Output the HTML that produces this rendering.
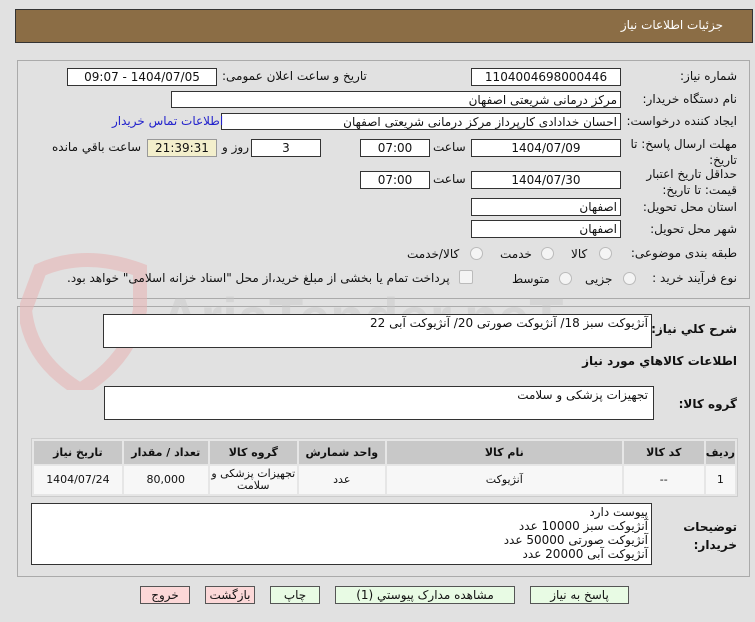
<!DOCTYPE html>
<html><head><meta charset="utf-8"><style>
body{margin:0;width:755px;height:622px;background:#e1e1e1;font-family:"DejaVu Sans","Liberation Sans",sans-serif;font-size:11px;color:#111;position:relative;overflow:hidden;direction:rtl}
.a{position:absolute;white-space:nowrap}
.box{position:absolute;background:#fff;border:1px solid #333;box-sizing:border-box;font-size:12px;line-height:16px;text-align:center}
.panel{position:absolute;border:1px solid #aaa;box-sizing:border-box;background:#e1e1e1}
.lbl{position:absolute;white-space:nowrap;font-size:12px;letter-spacing:-0.4px}
.b{font-weight:bold}
.rad{position:absolute;width:11px;height:11px;border-radius:50%;border:1px solid #bbb;background:#f4f4f4}
table{position:absolute;border-collapse:separate;border-spacing:2px;background:#e6e6e6;border:1px solid #ccc}
th{background:#c8c8c8;font-size:11px;height:23px;padding:0}
td{background:#f7f7f7;font-size:11px;height:28px;text-align:center;padding:0;line-height:12px}
.btn{position:absolute;top:586px;height:18px;border:1px solid #555;box-sizing:border-box;font-size:12px;text-align:center;line-height:16px;background:#e8fbe4}
</style></head><body>
<div class="a" style="left:15px;top:9px;width:738px;height:34px;background:#8b6d45;border:1px solid #333;box-sizing:border-box"></div>
<div class="a" style="right:32px;top:18px;color:#fff;font-size:12px">جزئیات اطلاعات نیاز</div>

<div class="panel" style="left:17px;top:60px;width:733px;height:239px"></div>
<div class="panel" style="left:17px;top:306px;width:733px;height:271px"></div>

<svg class="a" style="left:20px;top:250px" width="130" height="140" viewBox="0 0 130 140"><path d="M20 20 Q65 0 120 20 L120 60 Q110 110 60 140 Q10 110 5 60 Z" fill="none" stroke="#e6b5b5" stroke-width="14" opacity=".6"/></svg>
<div class="a" style="left:160px;top:285px;font-size:56px;font-weight:bold;color:#c8c8c8;opacity:.45;direction:ltr;font-family:'Liberation Sans',sans-serif">AriaTender.neT</div>

<div class="lbl" style="right:18px;top:69px">شماره نیاز:</div>
<div class="box" style="left:471px;top:68px;width:150px;height:18px">1104004698000446</div>
<div class="lbl" style="left:222px;top:69px">تاریخ و ساعت اعلان عمومی:</div>
<div class="box" style="left:67px;top:68px;width:150px;height:18px">1404/07/05 - 09:07</div>

<div class="lbl" style="right:18px;top:92px">نام دستگاه خریدار:</div>
<div class="box" style="left:171px;top:91px;width:450px;height:17px;text-align:right;padding-right:3px">مرکز درمانی شریعتی اصفهان</div>

<div class="lbl" style="right:18px;top:114px;letter-spacing:-0.8px">ایجاد کننده درخواست:</div>
<div class="box" style="left:221px;top:113px;width:400px;height:17px;text-align:right;padding-right:3px">احسان خدادادی کارپرداز مرکز درمانی شریعتی اصفهان</div>
<div class="lbl" style="left:112px;top:114px;color:#22c">اطلاعات تماس خریدار</div>

<div class="lbl" style="right:18px;top:136px;line-height:16px;white-space:normal;width:110px">مهلت ارسال پاسخ: تا تاریخ:</div>
<div class="box" style="left:471px;top:139px;width:150px;height:18px">1404/07/09</div>
<div class="lbl" style="left:433px;top:140px">ساعت</div>
<div class="box" style="left:360px;top:139px;width:70px;height:18px">07:00</div>
<div class="box" style="left:251px;top:139px;width:70px;height:18px">3</div>
<div class="lbl" style="left:222px;top:140px">روز و</div>
<div class="box" style="left:147px;top:139px;width:70px;height:18px;background:#f3efcc;border-color:#999">21:39:31</div>
<div class="lbl" style="left:52px;top:140px">ساعت باقي مانده</div>

<div class="lbl" style="right:18px;top:166px;line-height:16px;white-space:normal;width:110px">حداقل تاریخ اعتبار قیمت: تا تاریخ:</div>
<div class="box" style="left:471px;top:171px;width:150px;height:18px">1404/07/30</div>
<div class="lbl" style="left:433px;top:172px">ساعت</div>
<div class="box" style="left:360px;top:171px;width:70px;height:18px">07:00</div>

<div class="lbl" style="right:18px;top:200px">استان محل تحویل:</div>
<div class="box" style="left:471px;top:198px;width:150px;height:18px;text-align:right;padding-right:3px">اصفهان</div>
<div class="lbl" style="right:18px;top:222px">شهر محل تحویل:</div>
<div class="box" style="left:471px;top:220px;width:150px;height:18px;text-align:right;padding-right:3px">اصفهان</div>

<div class="lbl" style="right:18px;top:246px">طبقه بندی موضوعی:</div>
<div class="rad" style="left:599px;top:247px"></div><div class="lbl" style="left:571px;top:247px">کالا</div>
<div class="rad" style="left:541px;top:247px"></div><div class="lbl" style="left:500px;top:247px">خدمت</div>
<div class="rad" style="left:470px;top:247px"></div><div class="lbl" style="left:407px;top:247px">کالا/خدمت</div>

<div class="lbl" style="right:18px;top:271px">نوع فرآیند خرید :</div>
<div class="rad" style="left:623px;top:272px"></div><div class="lbl" style="left:585px;top:272px">جزیی</div>
<div class="rad" style="left:559px;top:272px"></div><div class="lbl" style="left:512px;top:272px">متوسط</div>
<div class="a" style="left:459px;top:270px;width:12px;height:12px;border:1px solid #bbb;background:#f4f4f4;border-radius:2px"></div>
<div class="lbl" style="left:67px;top:271px;letter-spacing:-0.6px">پرداخت تمام یا بخشی از مبلغ خرید،از محل "اسناد خزانه اسلامی" خواهد بود.</div>

<div class="lbl b" style="right:18px;top:322px">شرح کلي نیاز:</div>
<div class="box" style="left:103px;top:314px;width:549px;height:34px;text-align:right;padding-right:3px">آنژیوکت سبز 18/ آنژیوکت صورتی 20/ آنژیوکت آبی 22</div>
<div class="lbl b" style="right:18px;top:354px">اطلاعات کالاهاي مورد نیاز</div>
<div class="lbl b" style="right:18px;top:397px">گروه کالا:</div>
<div class="box" style="left:104px;top:386px;width:550px;height:34px;text-align:right;padding-right:5px">تجهیزات پزشکی و سلامت</div>

<table style="left:31px;top:438px;width:707px">
<tr><th style="width:27px">ردیف</th><th style="width:80px">کد کالا</th><th style="width:235px">نام کالا</th><th style="width:86px">واحد شمارش</th><th style="width:87px">گروه کالا</th><th style="width:84px">تعداد / مقدار</th><th>تاریخ نیاز</th></tr>
<tr><td>1</td><td>--</td><td>آنژیوکت</td><td>عدد</td><td>تجهیزات پزشکی و سلامت</td><td>80,000</td><td>1404/07/24</td></tr>
</table>

<div class="lbl b" style="right:18px;top:518px;line-height:18px">توضیحات<br>خریدار:</div>
<div class="box" style="left:31px;top:503px;width:621px;height:62px;text-align:right;padding-right:3px;padding-top:1px;line-height:14px">پیوست دارد<br>آنژیوکت سبز 10000 عدد<br>آنژیوکت صورتی 50000 عدد<br>آنژیوکت آبی 20000 عدد</div>

<div class="btn" style="left:140px;width:50px;background:#fcd8d8">خروج</div>
<div class="btn" style="left:205px;width:50px;background:#fcd8d8">بازگشت</div>
<div class="btn" style="left:270px;width:50px">چاپ</div>
<div class="btn" style="left:335px;width:180px">مشاهده مدارک پیوستي (1)</div>
<div class="btn" style="left:530px;width:99px">پاسخ به نیاز</div>
</body></html>
